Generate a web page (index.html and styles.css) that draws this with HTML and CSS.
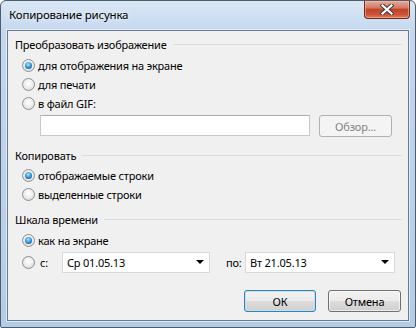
FILE: index.html
```html
<!DOCTYPE html>
<html lang="ru">
<head>
  <meta charset="UTF-8">
  <title>Копирование рисунка</title>
  <link rel="stylesheet" href="styles.css">
</head>
<body>
  <div class="window">
    <div class="titlebar">
      <span class="title">Копирование рисунка</span>
      <div class="close-btn">
        <svg width="14" height="11" viewBox="0 0 14 11">
          <path d="M2.5 1.5 L11.5 9.5 M11.5 1.5 L2.5 9.5" stroke="#3b3b3b" stroke-width="4.2" stroke-linecap="square" fill="none"/>
          <path d="M2.5 1.5 L11.5 9.5 M11.5 1.5 L2.5 9.5" stroke="#ffffff" stroke-width="2.2" stroke-linecap="square" fill="none"/>
        </svg>
      </div>
    </div>

    <div class="client">
      <div class="group first">
        <div class="group-title"><span>Преобразовать изображение</span></div>
        <label class="radio-row"><span class="radio checked"></span>для отображения на экране</label>
        <label class="radio-row"><span class="radio"></span>для печати</label>
        <label class="radio-row"><span class="radio"></span>в файл GIF:</label>
        <div class="file-row">
          <div class="textbox"></div>
          <div class="button disabled browse">Обзор...</div>
        </div>
      </div>

      <div class="group second">
        <div class="group-title"><span>Копировать</span></div>
        <label class="radio-row"><span class="radio checked"></span>отображаемые строки</label>
        <label class="radio-row"><span class="radio"></span>выделенные строки</label>
      </div>

      <div class="group third">
        <div class="group-title"><span>Шкала времени</span></div>
        <label class="radio-row"><span class="radio checked"></span>как на экране</label>
        <div class="range-row">
          <span class="radio"></span>
          <span class="range-label from">с:</span>
          <div class="combo from-combo"><span>Ср 01.05.13</span><span class="arrow"></span></div>
          <span class="range-label to">по:</span>
          <div class="combo to-combo"><span>Вт 21.05.13</span><span class="arrow"></span></div>
        </div>
      </div>

      <div class="actions">
        <div class="button default">ОК</div>
        <div class="button">Отмена</div>
      </div>
    </div>
  </div>
</body>
</html>
```

FILE: styles.css
```css
body {
  margin: 0;
  padding: 0;
  background: #ffffff;
  font-family: "Noto Sans", "Open Sans", sans-serif;
  font-size: 11px;
  letter-spacing: -0.2px;
  color: #000;
}

.window {
  width: 416px;
  height: 328px;
  box-sizing: border-box;
  border: 1px solid #4e5d6d;
  border-radius: 6px 6px 2px 2px;
  background: linear-gradient(180deg, #dae7f5 0%, #c3d7ee 10%, #bcd2ea 60%, #b4cce6 100%);
  overflow: hidden;
}

.titlebar {
  height: 29px;
  display: flex;
  padding-left: 8px;
}

.title {
  font-size: 11.5px;
  line-height: 28px;
  text-shadow: 0 0 6px rgba(255, 255, 255, 0.9);
}

.close-btn {
  margin-left: auto;
  margin-right: 5px;
  width: 46px;
  height: 18px;
  box-sizing: border-box;
  border: 1px solid #6d2b1e;
  border-top: none;
  border-radius: 0 0 4px 4px;
  background: linear-gradient(180deg, #e9a99a 0%, #d47a65 40%, #c0432b 50%, #cf5436 80%, #e07c5a 100%);
  box-shadow: inset 0 0 0 1px rgba(255, 200, 180, 0.5);
  display: flex;
  align-items: center;
  justify-content: center;
}

.client {
  margin: 0 6px;
  height: 291px;
  box-sizing: border-box;
  border: 1px solid #687a8d;
  box-shadow: 0 0 0 1px rgba(255, 255, 255, 0.55);
  background: #f0f0f0;
  padding: 0 6px 0 0;
}

.group-title {
  display: flex;
  align-items: center;
  height: 16px;
  padding-left: 7px;
}

.group-title::after {
  content: "";
  flex: 1;
  height: 1px;
  background: #d5dfe5;
  margin-left: 6px;
}

.group.first .group-title {
  margin-top: 5px;
  margin-bottom: 4px;
}

.group.second .group-title {
  margin-top: 11px;
  margin-bottom: 3px;
}

.group.third .group-title {
  margin-top: 7px;
  margin-bottom: 4px;
}

.radio-row,
.range-row {
  display: flex;
  align-items: center;
  height: 19px;
  padding-left: 14px;
}

.radio {
  width: 13px;
  height: 13px;
  box-sizing: border-box;
  border-radius: 50%;
  border: 1px solid #8e8f8f;
  background: radial-gradient(circle at 50% 40%, #ffffff 0%, #f1f1f1 40%, #d4d4d4 100%);
  margin-right: 3px;
  display: flex;
  align-items: center;
  justify-content: center;
  flex: none;
}

.radio.checked::after {
  content: "";
  width: 7px;
  height: 7px;
  border-radius: 50%;
  background: radial-gradient(circle at 45% 35%, #a4e6ff 0%, #4fb0e6 35%, #1a64a8 75%, #0c3f74 100%);
}

.file-row {
  display: flex;
  align-items: center;
  height: 22px;
  margin-top: 1px;
  padding-left: 32px;
}

.textbox {
  width: 270px;
  height: 21px;
  box-sizing: border-box;
  border: 1px solid #abadb3;
  border-color: #abadb3 #c6c8ce #c6c8ce #c6c8ce;
  background: #fff;
}

.button {
  width: 73px;
  height: 22px;
  box-sizing: border-box;
  border: 1px solid #707070;
  border-radius: 3px;
  background: linear-gradient(180deg, #f2f2f2 0%, #ebebeb 50%, #dddddd 51%, #cfcfcf 100%);
  box-shadow: inset 0 0 0 1px rgba(255, 255, 255, 0.6);
  display: flex;
  align-items: center;
  justify-content: center;
}

.button.browse {
  margin-left: 9px;
  margin-top: 2px;
}

.button.disabled {
  border-color: #adb2b5;
  background: #f4f4f4;
  color: #838383;
  box-shadow: none;
}

.button.default {
  width: 72px;
  border-color: #3c7fb1;
  box-shadow: inset 0 0 0 1px #b9e3f7;
}

.range-row {
  height: 22px;
  margin-top: 1px;
}

.range-label {
  width: 22px;
  padding-left: 2px;
}

.range-label.to {
  width: 19px;
  margin-left: 14px;
}

.combo {
  height: 21px;
  box-sizing: border-box;
  border: 1px solid #d7d9de;
  background: #fff;
  display: flex;
  align-items: center;
  padding-left: 4px;
  padding-right: 5px;
}

.combo span:first-child {
  flex: 1;
}

.from-combo {
  width: 148px;
}

.to-combo {
  width: 150px;
}

.arrow {
  width: 0;
  height: 0;
  border-left: 4px solid transparent;
  border-right: 4px solid transparent;
  border-top: 4px solid #000;
}

.actions {
  display: flex;
  justify-content: flex-end;
  gap: 12px;
  margin-top: 17px;
  padding-right: 1px;
}
```
